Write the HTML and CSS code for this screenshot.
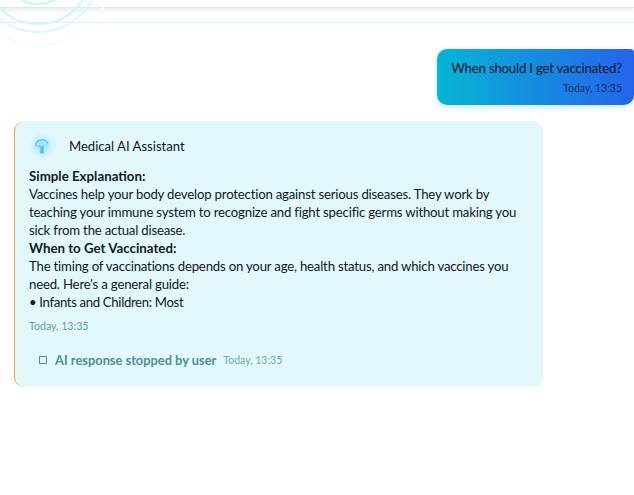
FILE: index.html
```html
<!DOCTYPE html>
<html lang="en">
<head>
  <meta charset="UTF-8">
  <meta name="viewport" content="width=device-width, initial-scale=1.0">
  <title>Medical AI Assistant</title>
  <link rel="stylesheet" href="styles.css">
</head>
<body>
  <!-- Header decoration -->
  <svg class="rings" width="120" height="60" viewBox="0 0 120 60" fill="none">
    <circle cx="38" cy="-30" r="34" stroke="#cdf2fb" stroke-width="2"/>
    <circle cx="38" cy="-30" r="54" stroke="#d2f3fb" stroke-width="2"/>
    <circle cx="38" cy="-30" r="62" stroke="#dcf6fc" stroke-width="2"/>
    <circle cx="38" cy="-30" r="75" stroke="#f5fcfe" stroke-width="2"/>
  </svg>

  <header class="top-bar"></header>
  <div class="sub-bar"></div>

  <main class="chat">
    <div class="user-row">
      <div class="user-msg">
        <p class="user-text">When should I get vaccinated?</p>
        <span class="user-time">Today, 13:35</span>
      </div>
    </div>

    <div class="ai-msg">
      <div class="ai-head">
        <span class="ai-icon">
          <svg class="brain" width="18" height="18" viewBox="0 0 18 18" fill="none">
            <path d="M2 8C2 4 5 2 9 2s7 2.500 7 6c0 2-1.500 3-3.500 3.500L11 13v3.500H7.500V12C4 12 2 10.500 2 8z" fill="#a6e5fb"/>
            <path d="M2.800 9c-.5-3.500 2.500-6.200 6.200-6.200 3 0 5.200 1.500 5.800 4" stroke="#66c8f3" stroke-width="1.500"/>
            <path d="M9 9v7.500" stroke="#4fc3f5" stroke-width="3.500"/>
            <path d="M5 8.500l4 2.500" stroke="#6fcdf5" stroke-width="2"/>
          </svg>
        </span>
        <span class="ai-name">Medical AI Assistant</span>
      </div>
      <div class="ai-body">
        <strong>Simple Explanation:</strong><br>
        Vaccines help your body develop protection against serious diseases. They work by teaching your immune system to recognize and fight specific germs without making you sick from the actual disease.<br>
        <strong>When to Get Vaccinated:</strong><br>
        The timing of vaccinations depends on your age, health status, and which vaccines you need. Here's a general guide:<br>
        <span class="ai-list">• Infants and Children: Most</span>
      </div>
      <div class="ai-time">Today, 13:35</div>
      <div class="stopped">
        <span class="stop-box"></span>
        <span class="stop-text">AI response stopped by user</span>
        <span class="stop-time">Today, 13:35</span>
      </div>
    </div>
  </main>
</body>
</html>
```

FILE: styles.css
```css
body {
  font-family: Lato, "Open Sans", Arial, sans-serif;
  background-color: #fff;
  margin: 0;
  color: #0f172a;
  height: 495px;
  overflow: hidden;
  position: relative;
}
.rings {
  position: absolute;
  left: 0;
  top: 0;
  filter: blur(0.5px);
}
.top-bar {
  height: 7px;
  border-bottom: 1px solid #dfe8e8;
  box-shadow: 0 3px 5px rgba(90, 110, 110, 0.12);
}
.sub-bar {
  height: 14px;
  border-bottom: 1px solid #d3f1f6;
}
.chat {
  padding: 26px 0 0 14px;
}
.user-row {
  display: flex;
  justify-content: flex-end;
}
.user-msg {
  width: 197px;
  height: 56px;
  box-sizing: border-box;
  padding: 10px 12px 0 12px;
  border-radius: 10px 4px 10px 10px;
  background: linear-gradient(90deg, #06b6d4, #2563eb);
  box-shadow: 0 2px 6px rgba(6, 182, 212, 0.25);
  text-align: right;
}
.user-text {
  margin: 0;
  font-size: 13.200px;
  letter-spacing: -0.2px;
  line-height: 18px;
  white-space: nowrap;
}
.user-time {
  display: block;
  margin-top: 4px;
  font-size: 10.500px;
  line-height: 14px;
  color: #10305f;
}
.ai-msg {
  width: 529px;
  height: 266px;
  box-sizing: border-box;
  margin-top: 16px;
  padding: 10px 15px 0 14px;
  background-color: #e2f8fd;
  border-left: 1px solid #f0a92e;
  border-radius: 10px;
}
.ai-head {
  display: flex;
  align-items: center;
  gap: 14px;
  height: 30px;
}
.ai-icon {
  width: 26px;
  height: 26px;
  display: flex;
  align-items: center;
  justify-content: center;
  border-radius: 50%;
  background: radial-gradient(circle, #bdeefc 30%, #e2f8fd 72%);
}
.brain {
  filter: blur(0.4px);
}
.ai-name {
  font-size: 13.100px;
}
.ai-body {
  margin-top: 6px;
  font-size: 13.200px;
  letter-spacing: -0.2px;
  line-height: 18px;
  color: #111827;
}
.ai-body strong {
  font-size: 13.300px;
  letter-spacing: 0;
}
.ai-list {
  letter-spacing: -0.35px;
}
.ai-time {
  margin-top: 8px;
  font-size: 10.600px;
  line-height: 14px;
  color: #5f9ea6;
}
.stopped {
  display: flex;
  align-items: center;
  height: 33px;
  margin-top: 10px;
  padding-left: 10px;
  border-radius: 8px;
  background-color: #e1f8fc;
}
.stop-box {
  width: 6px;
  height: 6px;
  border: 1px solid #4f8f98;
  margin-right: 8px;
}
.stop-text {
  font-size: 12.850px;
  font-weight: 700;
  color: #4f8f98;
}
.stop-time {
  margin-left: 7px;
  font-size: 10.500px;
  color: #6fa9b0;
}
```
